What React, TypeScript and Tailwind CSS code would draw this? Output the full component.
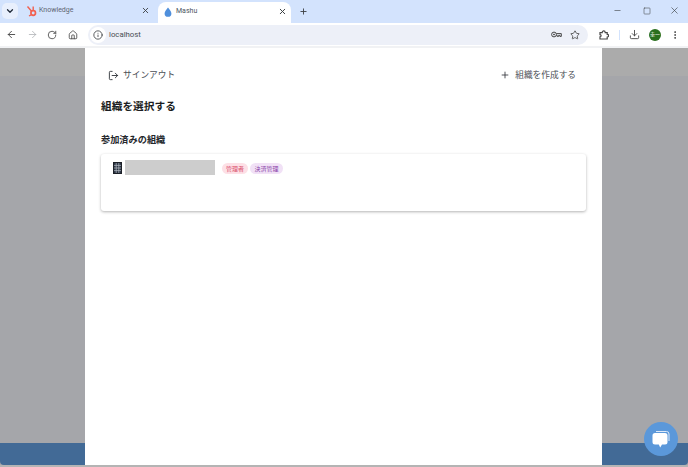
import React from 'react';
import { ArrowLeft, ArrowRight, RotateCw, Home, Info, Star, Download, MoreVertical, X, Plus, Minus, Square, ChevronDown, LogOut } from 'lucide-react';

const JP = "font-['Roboto','Noto_Sans_CJK_JP',sans-serif]";

const BuildingIcon = () => (
  <svg width="9" height="12" viewBox="0 0 9 12" className="shrink-0">
    <rect x="0.5" y="0.5" width="8" height="11" fill="#2a3342" stroke="#1c2027" />
    <path d="M3.2 1V11M5.8 1V11M1 3.4H8M1 6H8M1 8.6H8" stroke="#b9bec6" strokeWidth="0.7" />
  </svg>
);

const Tabs = () => (
  <div className="h-[23px] bg-[#d3e3fd] flex items-end shrink-0">
    <div className="w-[16px] h-[16px] ml-[2px] mb-[4px] rounded-[5px] bg-[#e8effc] flex items-center justify-center">
      <ChevronDown size={10} strokeWidth={3} className="text-[#1f2937]" />
    </div>
    <div className="w-[132px] h-[22px] pb-[3px] pl-[8px] flex items-center">
      <svg width="11" height="12" viewBox="0 0 11 12">
        <circle cx="7.2" cy="8" r="2.3" fill="none" stroke="#f2604f" strokeWidth="1.7" />
        <path d="M1.5 1.5L5.6 6.3M7.2 1.5V5M3 11L5.5 9.6" stroke="#f2604f" strokeWidth="1.4" />
      </svg>
      <span className="ml-[2px] text-[7px] text-[#5f6672] font-['Roboto',sans-serif]">Knowledge</span>
      <X size={9} strokeWidth={2.4} className="ml-auto mr-[0.5px] text-[#3c4043]" />
    </div>
    <div className="w-[133px] h-[21px] ml-[8px] pb-[2px] bg-white rounded-t-[8px] flex items-center pl-[6px] pr-[4.5px]">
      <svg width="8" height="10" viewBox="0 0 8 10">
        <path d="M4 0.5C5.5 2.6 7.4 4.3 7.4 6.4A3.4 3.4 0 0 1 0.6 6.4C0.6 4.3 2.5 2.6 4 0.5Z" fill="#4f8fdc" />
      </svg>
      <span className="ml-[4px] text-[7px] text-[#4b5563] font-['Roboto',sans-serif]">Mashu</span>
      <X size={9} strokeWidth={2.6} className="ml-auto text-[#3c4043]" />
    </div>
    <div className="ml-[7.5px] mb-[7px]">
      <Plus size={9} strokeWidth={2.4} className="text-[#3c4043]" />
    </div>
    <div className="ml-auto mb-[7px] flex items-center gap-[18px] pr-[8px]">
      <Minus size={9} strokeWidth={1.6} className="text-[#3c4043]" />
      <Square size={8} strokeWidth={1.6} className="text-[#3c4043] ml-[3px]" />
      <X size={11} strokeWidth={1.4} className="text-[#3c4043]" />
    </div>
  </div>
);

const Toolbar = () => (
  <div className="h-[25px] bg-white flex items-center shrink-0 border-b-[2px] border-[#f1f2f4]">
    <div className="w-[78px] flex items-center pl-[6px] gap-[9.5px] text-[#474747]">
      <ArrowLeft size={11} strokeWidth={2} />
      <ArrowRight size={11} strokeWidth={1.6} className="text-[#a9abb0]" />
      <RotateCw size={10} strokeWidth={2} />
      <Home size={10} strokeWidth={2} className="ml-[1px]" />
    </div>
    <div className="ml-[10px] w-[500px] h-[20px] rounded-full bg-[#edf0f8] flex items-center">
      <div className="ml-[2px] w-[16px] h-[16px] rounded-full bg-white flex items-center justify-center">
        <Info size={10} strokeWidth={2} className="text-[#3c4043]" />
      </div>
      <span className="ml-[3px] text-[7.8px] text-[#4a4e54] font-['Roboto',sans-serif]">localhost</span>
      <div className="ml-auto mr-[8px] flex items-center gap-[8.5px] text-[#474747]">
        <svg width="11" height="7" viewBox="0 0 11 7" fill="none" stroke="currentColor" strokeWidth="1">
          <circle cx="3" cy="3.5" r="2.4" />
          <circle cx="3" cy="3.5" r="0.5" fill="currentColor" />
          <path d="M5.4 2.6H10.3V5.4H8.9V4.4H7.6V5.4H6.2V4.4H5.4" />
        </svg>
        <Star size={10} strokeWidth={2} />
      </div>
    </div>
    <div className="flex items-center text-[#474747]">
      <svg width="10" height="10" viewBox="0 0 10 10" fill="none" stroke="currentColor" strokeWidth="1.2" className="ml-[11px]">
        <path d="M1 2.6H3.2C3.2 0.4 6.2 0.4 6.2 2.6H8.2V4.4C10.2 4.4 10.2 7 8.2 7V9H1V6.8C2.4 6.8 2.4 4.6 1 4.6Z" />
      </svg>
      <div className="w-[1px] h-[10px] bg-[#d3e3fd] ml-[10px]" />
      <Download size={11} strokeWidth={2} className="ml-[8.5px]" />
      <div className={`ml-[9.5px] w-[12px] h-[12px] rounded-full bg-[#2a6f1e] flex items-center justify-center text-[5px] text-white ${JP}`}>
        圭一
      </div>
      <MoreVertical size={10} strokeWidth={2.4} className="ml-[9px]" />
    </div>
  </div>
);

export default function App() {
  return (
    <div className={`w-[688px] h-[467px] overflow-hidden flex flex-col bg-white ${JP}`}>
      <Tabs />
      <Toolbar />
      <div className="relative flex-1 flex flex-col bg-[#a5a6aa]">
        <div className="h-[28px] bg-[#ababab]" />
        <div className="flex-1" />
        <div className="h-[22px] bg-[#426a96] rounded-b-[4px]" />
        <div className="h-[2px] bg-[#b4b4b4]" />

        {/* dialog over the dimmed page */}
        <div className="absolute top-0 left-[85px] w-[517px] h-[417px] bg-white px-[16px]">
          <div className="flex items-center justify-between h-[51px] pt-[3px]">
            <button className="flex items-center ml-[7px] text-[#4b4f56]">
              <LogOut size={11} strokeWidth={2} className="text-[#30343a]" />
              <span className="ml-[4px] text-[8.7px] leading-[14px]">サインアウト</span>
            </button>
            <button className="flex items-center mr-[10px] text-[#4b4f56]">
              <Plus size={10} strokeWidth={2} className="text-[#30343a]" />
              <span className="ml-[5px] text-[8.7px] leading-[14px]">組織を作成する</span>
            </button>
          </div>
          <h1 className="text-[10.7px] leading-[16px] font-bold text-[#1b1d21]">組織を選択する</h1>
          <h2 className="mt-[18px] text-[9.2px] leading-[14px] font-bold text-[#23262b]">参加済みの組織</h2>
          <div className="mt-[7px] h-[57px] w-[485px] rounded-[3px] bg-white shadow-[0_1px_3px_rgba(0,0,0,0.3)] px-[12px] pt-[6px] flex items-start">
            <div className="h-[15px] flex items-center">
              <BuildingIcon />
            </div>
            <div className="ml-[3px] w-[90px] h-[15px] bg-[#cdcdcd]" />
            <span className="ml-[7px] mt-[3px] h-[11px] px-[4px] rounded-full bg-[#fde0e6] text-[#d9506e] text-[6px] leading-[11px]">管理者</span>
            <span className="ml-[2px] mt-[3px] h-[11px] px-[4.5px] rounded-full bg-[#f1e1f6] text-[#8a44a8] text-[6px] leading-[11px]">決済管理</span>
          </div>
        </div>

        {/* chat launcher */}
        <button className="absolute right-[10px] bottom-[11px] w-[34px] h-[34px] rounded-full bg-[#5b98da] flex items-center justify-center">
          <svg width="20" height="19" viewBox="0 0 20 19">
            <path d="M5 1.5H15.5A2.5 2.5 0 0 1 18 4V11" fill="none" stroke="#dfeaf8" strokeWidth="1" />
            <path d="M4 3H14A2.5 2.5 0 0 1 16.5 5.5V12A2.5 2.5 0 0 1 14 14.5H11L9.2 17.5L7.8 14.5H4A2.5 2.5 0 0 1 1.5 12V5.5A2.5 2.5 0 0 1 4 3Z" fill="#ffffff" />
          </svg>
        </button>
      </div>
    </div>
  );
}
